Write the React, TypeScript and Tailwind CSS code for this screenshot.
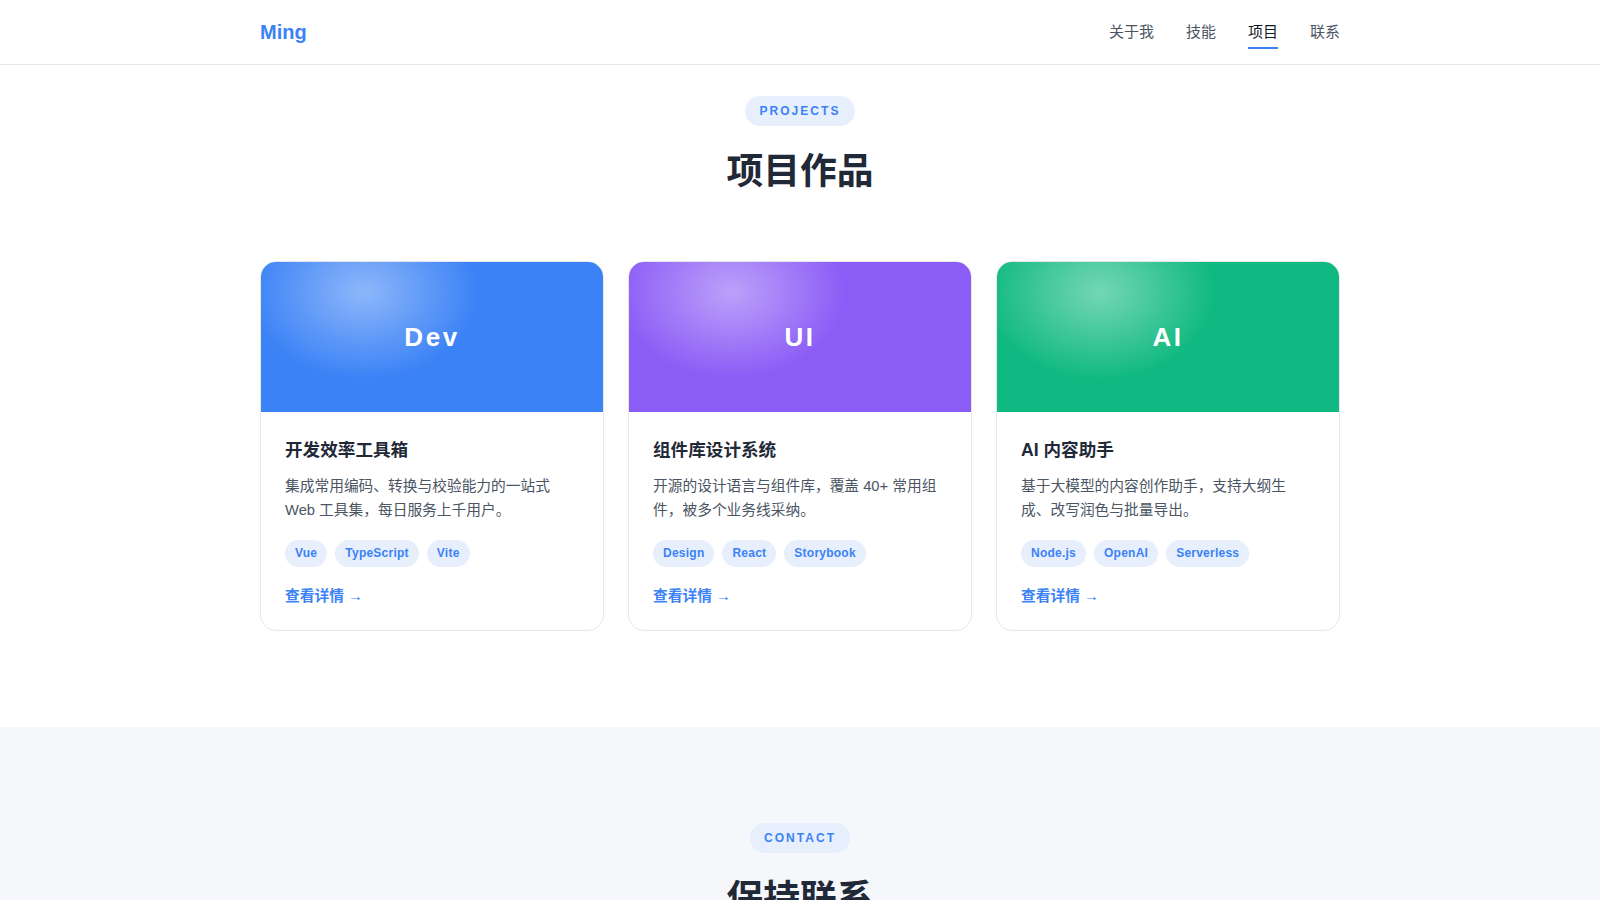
import React from 'react';

type Project = {
  key: string;
  cover: string;
  title: string;
  desc: string;
  tags: string[];
};

const projects: Project[] = [
  {
    key: 'Dev',
    cover: 'bg-[#3b82f6]',
    title: '开发效率工具箱',
    desc: '集成常用编码、转换与校验能力的一站式 Web 工具集，每日服务上千用户。',
    tags: ['Vue', 'TypeScript', 'Vite'],
  },
  {
    key: 'UI',
    cover: 'bg-[#8b5cf6]',
    title: '组件库设计系统',
    desc: '开源的设计语言与组件库，覆盖 40+ 常用组件，被多个业务线采纳。',
    tags: ['Design', 'React', 'Storybook'],
  },
  {
    key: 'AI',
    cover: 'bg-[#10b981]',
    title: 'AI 内容助手',
    desc: '基于大模型的内容创作助手，支持大纲生成、改写润色与批量导出。',
    tags: ['Node.js', 'OpenAI', 'Serverless'],
  },
];

const navItems = ['关于我', '技能', '项目', '联系'];

function SectionBadge({ children }: { children: React.ReactNode }) {
  return (
    <span className="inline-block rounded-full bg-[#e7effd] px-[14px] py-1.5 text-xs leading-[18px] font-bold tracking-[0.17em] text-[#3b82f6]">
      {children}
    </span>
  );
}

function ProjectCard({ project }: { project: Project }) {
  return (
    <div className="flex flex-col overflow-hidden rounded-2xl border border-[#e5e7eb] bg-white">
      {/* Cover with soft glow */}
      <div
        className={`flex h-[150px] items-center justify-center bg-[radial-gradient(ellipse_115px_88px_at_30%_20%,rgba(255,255,255,0.42),rgba(255,255,255,0))] ${project.cover}`}
      >
        <span className="text-[26px] font-bold tracking-[0.1em] text-white">{project.key}</span>
      </div>
      <div className="px-6 pt-6 pb-[22px]">
        <h3 className="text-[1.1rem] leading-7 font-bold text-[#1f2937]">{project.title}</h3>
        <p className="mt-2.5 text-[0.92rem] leading-6 text-[#4b5563]">{project.desc}</p>
        <div className="mt-[18px] flex gap-2">
          {project.tags.map(tag => (
            <span
              key={tag}
              className="rounded-full bg-[#e7effd] px-2.5 py-[5px] text-xs leading-[17px] font-bold tracking-[0.02em] text-[#3b82f6]"
            >
              {tag}
            </span>
          ))}
        </div>
        <a href="#" className="mt-[17px] block text-[0.92rem] leading-6 font-semibold text-[#3b82f6]">
          查看详情 <span className="font-normal">→</span>
        </a>
      </div>
    </div>
  );
}

export default function App() {
  return (
    <div className="min-h-screen bg-white font-['Liberation_Sans','Noto_Sans_CJK_SC',sans-serif] text-[#1f2937]">
      {/* Header */}
      <header className="h-[65px] border-b border-[#e2e8f0] bg-white shadow-[0_1px_4px_rgba(15,23,42,0.04)]">
        <div className="mx-auto flex h-full max-w-[1080px] items-center justify-between">
          <a href="#" className="text-xl font-bold text-[#3b82f6]">
            Ming
          </a>
          <nav className="flex gap-8 text-[15px]">
            {navItems.map(item => (
              <a
                key={item}
                href="#"
                className={
                  item === '项目'
                    ? 'border-b-2 border-[#3b82f6] pt-[6px] pb-[4px] leading-[22px] text-[#111827]'
                    : 'border-b-2 border-transparent pt-[6px] pb-[4px] leading-[22px] text-[#4b5563]'
                }
              >
                {item}
              </a>
            ))}
          </nav>
        </div>
      </header>

      {/* Projects */}
      <section className="bg-white pt-[31px] pb-24">
        <div className="mx-auto max-w-[1080px]">
          <div className="flex flex-col items-center">
            <SectionBadge>PROJECTS</SectionBadge>
            <h2 className="mt-6 text-[2.3rem] leading-[44px] font-bold text-[#1f2937]">项目作品</h2>
          </div>
          <div className="mt-[67px] grid grid-cols-3 gap-6">
            {projects.map(p => (
              <ProjectCard key={p.key} project={p} />
            ))}
          </div>
        </div>
      </section>

      {/* Contact */}
      <section className="bg-[#f5f7fb] pt-24 pb-24">
        <div className="mx-auto max-w-[1080px]">
          <div className="flex flex-col items-center">
            <SectionBadge>CONTACT</SectionBadge>
            <h2 className="mt-6 text-[2.3rem] leading-[44px] font-bold text-[#1f2937]">保持联系</h2>
            <p className="mt-4 text-[0.92rem] leading-6 text-[#4b5563]">欢迎交流合作，期待与你一起创造有价值的产品。</p>
          </div>
        </div>
      </section>
    </div>
  );
}
